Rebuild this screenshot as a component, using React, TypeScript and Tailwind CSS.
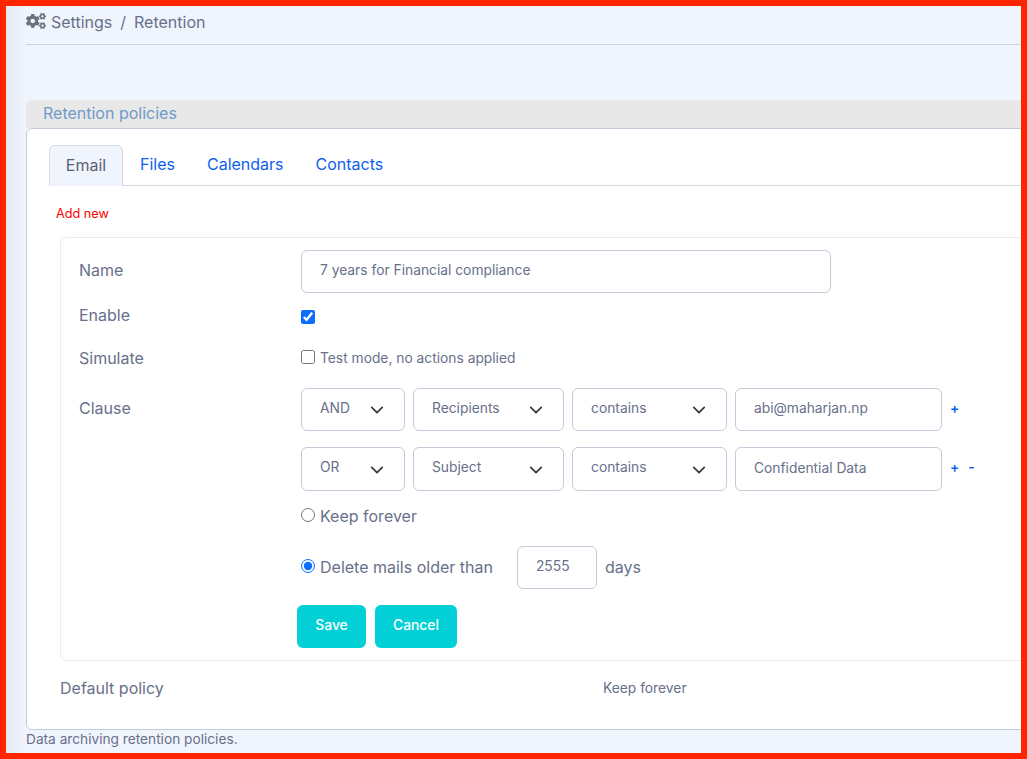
import { FaCogs } from "react-icons/fa";

const font = "font-['Inter','Noto_Sans',sans-serif]";

function Select({ label, width }: { label: string; width: string }) {
  return (
    <div className={`flex h-full items-center justify-between rounded-[6px] border border-[#c5cbd8] bg-white pl-[18px] pr-[20px] text-[13.8px] text-[#68708a] ${width}`}>
      <span className="-mt-[3px]">{label}</span>
      <svg viewBox="0 0 16 16" className="mt-[1px] h-[14px] w-[14px] text-[#343a40]" fill="none" stroke="currentColor" strokeWidth="2" strokeLinecap="round" strokeLinejoin="round" aria-hidden>
        <path d="M2 5l6 6 6-6" />
      </svg>
    </div>
  );
}

function TextBox({ value, className }: { value: string; className: string }) {
  return (
    <input
      readOnly
      value={value}
      className={`h-full rounded-[6px] border border-[#c5cbd8] bg-white pb-[3px] pl-[18px] text-[13.8px] text-[#68708a] outline-none ${className}`}
    />
  );
}

function Label({ children, className = "" }: { children: string; className?: string }) {
  return <div className={`w-[222px] shrink-0 text-[16px] text-[#68708a] ${className}`}>{children}</div>;
}

function ClauseRow({ op, field, value, minus, height }: { op: string; field: string; value: string; minus?: boolean; height: string }) {
  return (
    <div className={`flex items-center gap-2 ${height}`}>
      <Select label={op} width="w-[104px]" />
      <Select label={field} width="w-[151px]" />
      <Select label="contains" width="w-[155px]" />
      <TextBox value={value} className="w-[207px]" />
      <div className="-mt-[3px] flex gap-[9px] text-[13.8px] font-semibold text-[#0d5ff0]">
        <span>+</span>
        {minus && <span>-</span>}
      </div>
    </div>
  );
}

export default function App() {
  return (
    <div className={`${font} h-[759px] w-[1027px] overflow-hidden border-[6px] border-[#ff2500] bg-[linear-gradient(90deg,#e5e9f3_0px,#f0f4fc_20px)] pl-[20px]`}>
      <div className="w-[1100px]">
        <div className="flex h-[39px] items-start gap-[5px] border-b border-[#ccd3e0] pt-[4px] text-[16px] text-[#68708a]">
          <FaCogs className="mt-[1px] h-[20px] w-[20px] text-[#6c7280]" />
          <span>Settings</span>
          <span className="ml-[3px]">/</span>
          <span className="ml-[3px]">Retention</span>
        </div>

        <div className="mt-[55px] flex h-[28px] items-center rounded-t-[6px] bg-[#e8e8e8] pb-[2px] pl-[17px] text-[16px] text-[#6f9bc9]">
          Retention policies
        </div>

        <div className="h-[602px] rounded-[6px] border border-[#c3ccd9] bg-white pl-[22px] pt-[16px]">
          <div className="flex h-[41px] border-b border-[#d5dae3] text-[16px] text-[#0d5ff0]">
            <div className="flex h-[41px] w-[74px] items-center justify-center rounded-t-[6px] border border-b-0 border-[#d5dae3] bg-[#f0f4fc] pb-[3px] text-[#5a6274]">
              Email
            </div>
            <div className="ml-[17px] flex items-center pb-[3px]">Files</div>
            <div className="ml-[32px] flex items-center pb-[3px]">Calendars</div>
            <div className="ml-[32px] flex items-center pb-[3px]">Contacts</div>
          </div>

          <div className="ml-[7px] mt-[19px] text-[12.7px] leading-[17px] text-[#ff0000]">Add new</div>

          <div className="ml-[11px] mt-[15px] h-[424px] rounded-[6px] border border-[#ececec] pl-[18px] pt-[12px]">
            <div className="flex h-[43px] items-center">
              <Label className="-mt-[3px]">Name</Label>
              <TextBox value="7 years for Financial compliance" className="w-[530px]" />
            </div>
            <div className="mt-[3px] flex h-[40px] items-center">
              <Label className="-mt-[3px]">Enable</Label>
              <input type="checkbox" readOnly checked className="mt-[1px] h-[14px] w-[14px] accent-[#0d6efd]" />
            </div>
            <div className="mt-[1px] flex h-[40px] items-center">
              <Label className="mt-[1px]">Simulate</Label>
              <input type="checkbox" readOnly className="-mt-[1px] h-[14px] w-[14px]" />
              <span className="ml-[5px] mt-[2px] text-[13.8px] text-[#68708a]">Test mode, no actions applied</span>
            </div>
            <div className="mt-[11px] flex">
              <Label className="pt-[8px]">Clause</Label>
              <div>
                <ClauseRow op="AND" field="Recipients" value="abi@maharjan.np" height="h-[43px]" />
                <ClauseRow op="OR" field="Subject" value="Confidential Data" minus height="mt-[16px] h-[44px]" />
                <div className="mt-[10px] flex h-[30px] items-center text-[16px] text-[#68708a]">
                  <input type="radio" name="keep" readOnly className="-mt-[3px] h-[14px] w-[14px]" />
                  <span className="ml-[5px]">Keep forever</span>
                </div>
                <div className="mt-[15px] flex h-[43px] items-center text-[16px] text-[#68708a]">
                  <input type="radio" name="keep" readOnly checked className="-mt-[4px] h-[14px] w-[14px] accent-[#0d6efd]" />
                  <span className="ml-[5px] -mt-[2px]">Delete mails older than</span>
                  <input readOnly value="2555" className="ml-[24px] h-full w-[80px] rounded-[6px] border border-[#c5cbd8] pb-[3px] pl-[18px] text-[13.8px] outline-none" />
                  <span className="ml-[8px] -mt-[2px]">days</span>
                </div>
                <div className="-ml-[4px] mt-[16px] flex h-[43px] gap-[9px] text-[13.8px] font-medium text-white">
                  <button type="button" className="w-[69px] rounded-[6px] bg-[#03cfd6] pb-[3px]">Save</button>
                  <button type="button" className="w-[82px] rounded-[6px] bg-[#03cfd6] pb-[3px]">Cancel</button>
                </div>
              </div>
            </div>
          </div>

          <div className="ml-[11px] mt-[15px] flex items-center text-[#68708a]">
            <div className="w-[543px] text-[16px]">Default policy</div>
            <div className="text-[13.8px]">Keep forever</div>
          </div>
        </div>

        <div className="text-[13.7px] leading-[18px] text-[#68708a]">Data archiving retention policies.</div>
      </div>
    </div>
  );
}
